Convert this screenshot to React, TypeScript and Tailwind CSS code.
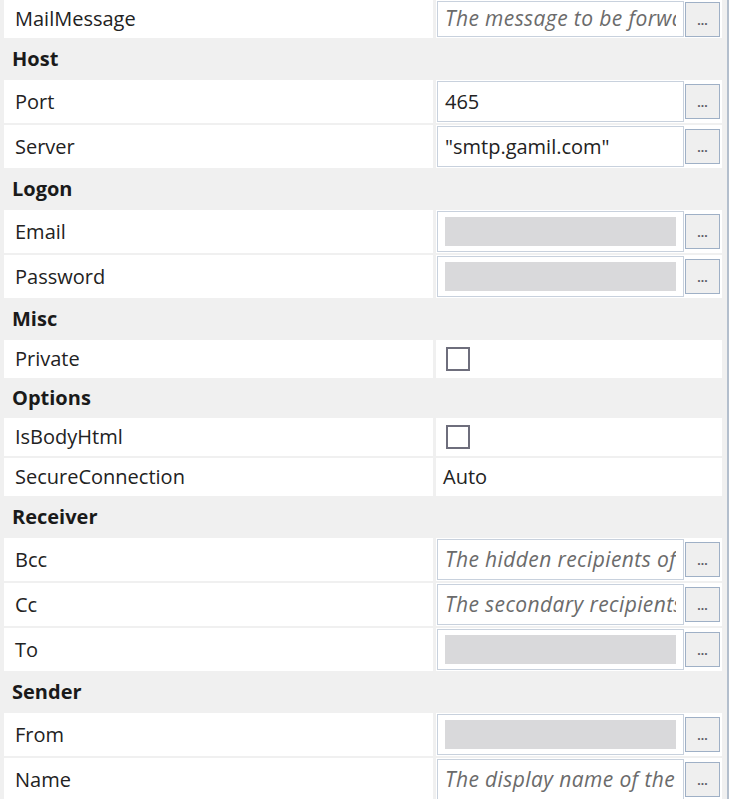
import React from "react";

type Row =
  | { kind: "header"; label: string; h?: number }
  | { kind: "text"; label: string; value?: string; hint?: string; empty?: boolean; h?: number }
  | { kind: "check"; label: string }
  | { kind: "plain"; label: string; value: string };

const rows: Row[] = [
  { kind: "text", label: "MailMessage", hint: "The message to be forwarded", h: 38 },
  { kind: "header", label: "Host" },
  { kind: "text", label: "Port", value: "465" },
  { kind: "text", label: "Server", value: "\"smtp.gamil.com\"" },
  { kind: "header", label: "Logon" },
  { kind: "text", label: "Email", empty: true },
  { kind: "text", label: "Password", empty: true },
  { kind: "header", label: "Misc" },
  { kind: "check", label: "Private" },
  { kind: "header", label: "Options", h: 36 },
  { kind: "check", label: "IsBodyHtml" },
  { kind: "plain", label: "SecureConnection", value: "Auto" },
  { kind: "header", label: "Receiver" },
  { kind: "text", label: "Bcc", hint: "The hidden recipients of the email" },
  { kind: "text", label: "Cc", hint: "The secondary recipients of the email" },
  { kind: "text", label: "To", empty: true },
  { kind: "header", label: "Sender" },
  { kind: "text", label: "From", empty: true },
  { kind: "text", label: "Name", hint: "The display name of the sender" },
];

function Dots() {
  return (
    <button className="w-[35px] h-[35px] shrink-0 border border-[#9fb0c6] bg-[#efefef] flex items-end justify-center pb-[9px] text-[12px] font-bold leading-none text-[#5a5a66]">
      ...
    </button>
  );
}

function Label({ text }: { text: string }) {
  return (
    <div className="w-[429px] shrink-0 bg-white flex items-center pl-[11px] text-[#222]">
      {text}
    </div>
  );
}

function PropRow({ row }: { row: Row }) {
  if (row.kind === "header") {
    return (
      <div
        className="flex items-center pl-[12px] font-bold text-[#1a1a1a]"
        style={{ height: row.h ?? 38 }}
      >
        {row.label}
      </div>
    );
  }
  const h = row.kind === "text" ? row.h ?? 43 : 38;
  return (
    <div className="flex gap-[3px] pl-[4px] pr-[5px]" style={{ height: h }}>
      <Label text={row.label} />
      <div className="flex-1 min-w-0 bg-white flex items-center">
        {row.kind === "text" && (
          <div className="flex items-center gap-[1px] w-full h-full py-[1px] pl-[1px] pr-[2px]">
            <div className="flex-1 min-w-0 h-full border border-[#c8d1dd] bg-white flex items-center px-[7px] overflow-hidden whitespace-nowrap">
              {row.empty ? (
                <div className="w-full h-[29px] bg-[#d9d9db]" />
              ) : row.hint ? (
                <span className="block w-full overflow-hidden italic text-[21px] tracking-[0.4px] text-[#6b6b6b]">
                  {row.hint}
                </span>
              ) : (
                <span className="text-[#222]">{row.value}</span>
              )}
            </div>
            <Dots />
          </div>
        )}
        {row.kind === "check" && (
          <div className="ml-[10px] w-[24px] h-[24px] border-2 border-[#6e6e7c] bg-white" />
        )}
        {row.kind === "plain" && (
          <span className="pl-[7px] text-[#222]">{row.value}</span>
        )}
      </div>
    </div>
  );
}

export default function App() {
  return (
    <div
      className="w-[729px] h-[799px] overflow-hidden bg-[#f0f0f0] text-[20px] border-r-2 border-[#b4bfcd]"
      style={{ fontFamily: "'Open Sans', 'Noto Sans', sans-serif" }}
    >
      <div className="flex flex-col gap-[2px]">
        {rows.map((r, i) => (
          <PropRow key={i} row={r} />
        ))}
      </div>
    </div>
  );
}
